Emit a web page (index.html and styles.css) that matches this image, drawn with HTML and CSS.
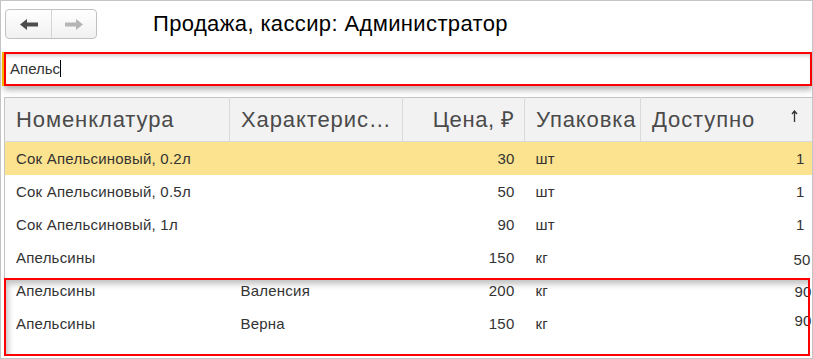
FILE: index.html
```html
<!DOCTYPE html>
<html>
<head>
    <meta charset='utf-8'>
    <title>Продажа, кассир: Администратор</title>
    <link rel="stylesheet" href="styles.css">
</head>
<body>
<div class="window">
    <div class="topBar">
        <div class="navGroup">
            <button class="navBtn">
                <svg width="18" height="11" viewBox="0 0 18 11"><path d="M0 5.5 L7 0 V3.5 H18 V7.5 H7 V11 Z" fill="#4d4d4d"/></svg>
            </button>
            <button class="navBtn">
                <svg width="18" height="11" viewBox="0 0 18 11"><path d="M18 5.5 L11 0 V3.5 H0 V7.5 H11 V11 Z" fill="#b5b5b5"/></svg>
            </button>
        </div>
        <h1 class="title">Продажа, кассир: Администратор</h1>
    </div>

    <div class="search">Апельс<span class="caret"></span></div>

    <table class="goods">
        <colgroup>
            <col class="colName">
            <col class="colChar">
            <col class="colPrice">
            <col class="colPack">
            <col class="colQty">
        </colgroup>
        <thead>
            <tr>
                <th>Номенклатура</th>
                <th>Характерис…</th>
                <th class="num">Цена, ₽</th>
                <th>Упаковка</th>
                <th class="qtyHead">Доступно
                    <svg class="sortMark" width="7" height="12" viewBox="0 0 7 12"><path d="M3.5 1 V12 M1 4 L3.5 1 L6 4" fill="none" stroke="#333" stroke-width="1.3"/></svg>
                </th>
            </tr>
        </thead>
        <tbody>
            <tr class="current">
                <td>Сок Апельсиновый, 0.2л</td><td></td><td class="num">30</td><td>шт</td><td class="qty">1</td>
            </tr>
            <tr>
                <td>Сок Апельсиновый, 0.5л</td><td></td><td class="num">50</td><td>шт</td><td class="qty">1</td>
            </tr>
            <tr>
                <td>Сок Апельсиновый, 1л</td><td></td><td class="num">90</td><td>шт</td><td class="qty">1</td>
            </tr>
            <tr>
                <td>Апельсины</td><td></td><td class="num">150</td><td>кг</td><td class="qty"><span class="qtyLow">50</span></td>
            </tr>
            <tr>
                <td>Апельсины</td><td>Валенсия</td><td class="num">200</td><td>кг</td><td class="qty"><span class="qtyDown">90</span></td>
            </tr>
            <tr>
                <td>Апельсины</td><td>Верна</td><td class="num">150</td><td>кг</td><td class="qty"><span class="qtyUp">90</span></td>
            </tr>
        </tbody>
    </table>

    <div class="markBox"></div>
</div>
</body>
</html>
```

FILE: styles.css
```css
*{
    box-sizing: border-box;
}
body{
    margin: 0px;
    font-family: "Liberation Sans", Arial, sans-serif;
    background: #fff;
}
.window{
    position: relative;
    width: 813px;
    height: 359px;
    border: 1px solid #c4c4c4;
    overflow: hidden;
}
.topBar{
    display: flex;
    align-items: center;
    padding: 8px 0px 0px 4px;
}
.navGroup{
    display: flex;
    height: 30px;
    border: 1px solid #c2c2c2;
    border-radius: 4px;
    background: linear-gradient(#ffffff, #f1f1f1);
    overflow: hidden;
}
.navBtn{
    width: 45px;
    border: none;
    background: transparent;
    padding: 0px;
    display: flex;
    align-items: center;
    justify-content: center;
}
.navBtn + .navBtn{
    border-left: 1px solid #d4d4d4;
}
.title{
    margin: 0px 0px 0px 56px;
    font-size: 22px;
    letter-spacing: 0.37px;
    font-weight: normal;
    color: #000;
    line-height: 30px;
}
.search{
    margin: 13px 0px 0px 3px;
    height: 34px;
    border: 2px solid #ff0000;
    padding-left: 4px;
    font-size: 15px;
    line-height: 30px;
    color: #333;
    box-shadow: -2px 0px 0px 0px #f2b200, inset 0px 4px 4px -2px rgba(0,0,0,0.18), 0px 4px 6px rgba(0,0,0,0.3);
}
.caret{
    display: inline-block;
    width: 1px;
    height: 17px;
    background: #000;
    vertical-align: -3px;
}
.goods{
    margin: 11px 0px 0px 3px;
    width: 808px;
    table-layout: fixed;
    border-collapse: collapse;
    border-top: 1px solid #c4c4c4;
    border-left: 1px solid #c4c4c4;
}
.colName{ width: 225px; }
.colChar{ width: 173px; }
.colPrice{ width: 122px; }
.colPack{ width: 116px; }
.colQty{ width: 172px; }
.goods th{
    height: 44px;
    background: #f2f2f2;
    border-right: 1px solid #d9d9d9;
    border-bottom: 1px solid #d9d9d9;
    padding: 0px 10px 0px 11px;
    text-align: left;
    font-size: 22px;
    letter-spacing: 0.9px;
    line-height: 26px;
    font-weight: normal;
    color: #4a4a4a;
    white-space: nowrap;
    overflow: hidden;
}
.goods th:last-child{
    border-right: none;
}
.goods th.num{
    text-align: right;
    padding-right: 9px;
    letter-spacing: 0.6px;
}
.qtyHead{
    position: relative;
}
.sortMark{
    position: absolute;
    right: 15px;
    top: 12px;
}
.goods td{
    height: 33px;
    padding: 0px 10px 0px 11px;
    font-size: 15px;
    letter-spacing: 0.22px;
    color: #333;
    white-space: nowrap;
}
.goods td.num{
    text-align: right;
}
.goods td.qty{
    text-align: right;
    padding-right: 8px;
}
.current td{
    background: #fce38f;
}
.qtyLow{
    display: inline-block;
    margin-right: -6px;
    vertical-align: -4px;
}
.qtyDown{
    display: inline-block;
    margin-right: -7px;
    vertical-align: -3px;
}
.qtyUp{
    display: inline-block;
    margin-right: -7px;
    vertical-align: 6px;
}
.markBox{
    position: absolute;
    left: 3px;
    top: 277px;
    width: 806px;
    height: 78px;
    border: 2px solid #ff0000;
    box-shadow: inset 4px 6px 6px -2px rgba(0,0,0,0.25);
}
```
